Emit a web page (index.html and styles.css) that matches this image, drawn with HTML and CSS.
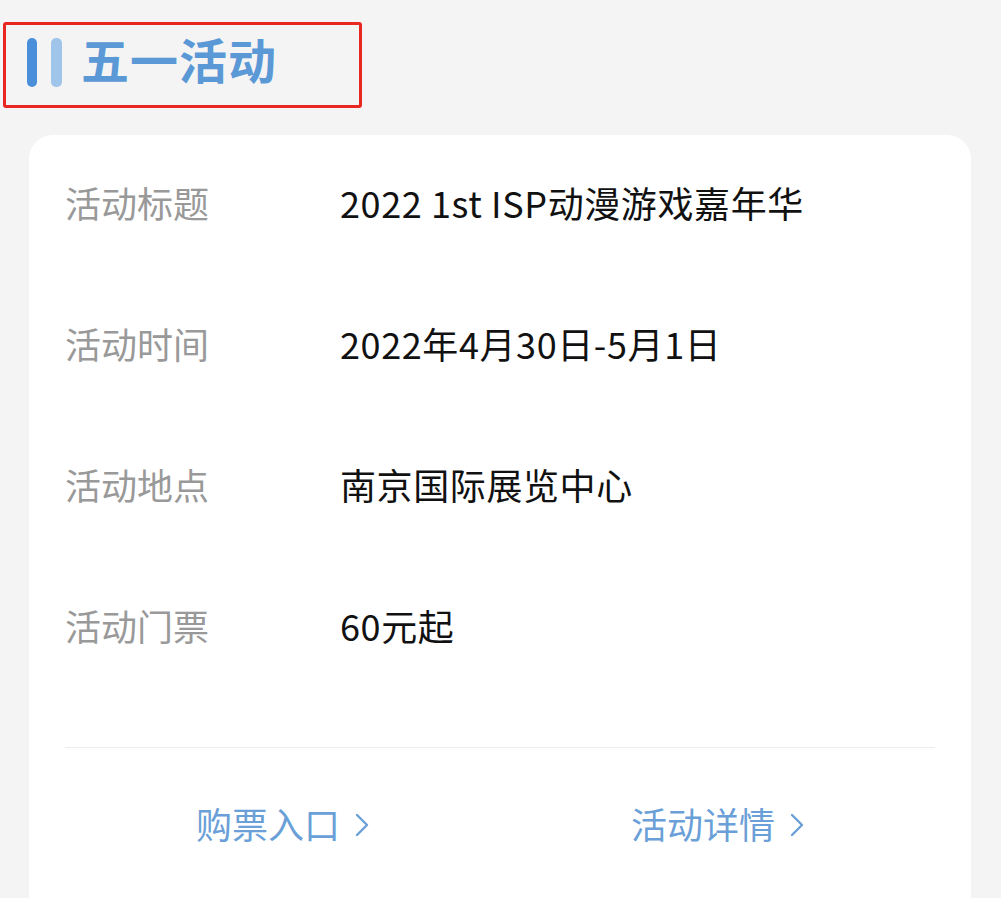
FILE: index.html
```html
<!DOCTYPE html>
<html lang="zh-CN">
<head>
    <meta charset="UTF-8">
    <meta name="viewport" content="width=device-width, initial-scale=1.0">
    <title>五一活动</title>
    <link rel="stylesheet" href="styles.css">
</head>
<body>
    <!-- Section heading -->
    <div class="section-head">
        <span class="bar bar-dark"></span>
        <span class="bar bar-light"></span>
        <h1>五一活动</h1>
    </div>

    <div class="event-card">
        <div class="info-row">
            <span class="info-label">活动标题</span>
            <span class="info-value">2022 1st ISP动漫游戏嘉年华</span>
        </div>
        <div class="info-row">
            <span class="info-label">活动时间</span>
            <span class="info-value">2022年4月30日-5月1日</span>
        </div>
        <div class="info-row">
            <span class="info-label">活动地点</span>
            <span class="info-value">南京国际展览中心</span>
        </div>
        <div class="info-row">
            <span class="info-label">活动门票</span>
            <span class="info-value">60元起</span>
        </div>

        <div class="card-links">
            <a class="card-link" href="#">购票入口
                <svg class="chevron" width="14" height="24" viewBox="0 0 14 24"><path d="M2 2 L12 12 L2 22" fill="none" stroke="currentColor" stroke-width="2.4" stroke-linecap="round" stroke-linejoin="round"/></svg>
            </a>
            <a class="card-link" href="#">活动详情
                <svg class="chevron" width="14" height="24" viewBox="0 0 14 24"><path d="M2 2 L12 12 L2 22" fill="none" stroke="currentColor" stroke-width="2.4" stroke-linecap="round" stroke-linejoin="round"/></svg>
            </a>
        </div>
    </div>
</body>
</html>
```

FILE: styles.css
```css
* {
    box-sizing: border-box;
    font-family: "Noto Sans CJK SC", "Noto Sans", sans-serif;
}

body {
    margin: 0;
    background-color: #f4f4f4;
    height: 898px;
    overflow: hidden;
}

/* Heading with red outline */
.section-head {
    display: flex;
    align-items: center;
    width: 359px;
    height: 86px;
    margin: 22px 0 0 3px;
    padding: 0 0 6px 21px;
    border: 3px solid #ea2621;
    border-radius: 3px;
}

.bar {
    width: 10px;
    height: 49px;
    border-radius: 5px;
    margin-right: 14px;
}

.bar-dark {
    background: #4b8fdb;
}

.bar-light {
    background: #a0c5eb;
    width: 11px;
    margin-right: 19px;
}

.section-head h1 {
    margin: 0 0 8px;
    font-size: 48px;
    font-weight: 700;
    color: #5b98d6;
    letter-spacing: 1px;
    line-height: 1;
}

/* Card */
.event-card {
    width: 942px;
    margin: 27px 0 0 29px;
    padding: 0 36px;
    background: #fff;
    border-radius: 24px 24px 0 0;
    min-height: 800px;
}

.info-row {
    display: flex;
    align-items: center;
    height: 141px;
    padding-bottom: 7px;
}

.info-label {
    width: 275px;
    font-size: 36px;
    color: #999;
}

.info-value {
    font-size: 36px;
    letter-spacing: 0.6px;
    color: #111;
}

.card-links {
    display: flex;
    margin-top: 48px;
    padding-top: 49px;
    border-top: 1px solid #ececec;
}

.card-link {
    flex: 1;
    display: flex;
    align-items: center;
    justify-content: center;
    gap: 15px;
    font-size: 36px;
    line-height: 52px;
    color: #6a9fd7;
    text-decoration: none;
}

.chevron {
    margin-top: 4px;
}
```
